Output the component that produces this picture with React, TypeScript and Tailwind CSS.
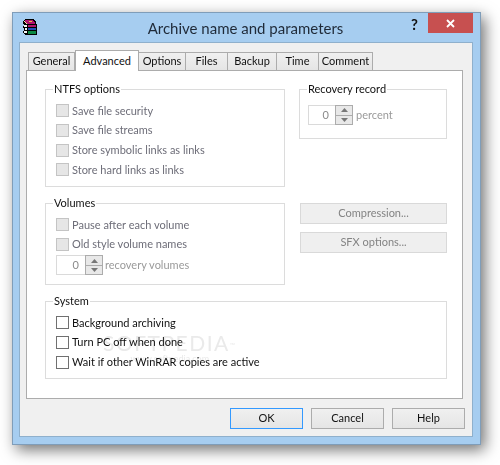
const FONT = "font-['Lato','Open_Sans',sans-serif]";

const TABS = [
  { label: "General", width: "w-[47px]" },
  { label: "Advanced", width: "w-[64px]", active: true },
  { label: "Options", width: "w-[47px]" },
  { label: "Files", width: "w-[42px]" },
  { label: "Backup", width: "w-[49px]" },
  { label: "Time", width: "w-[42px]" },
  { label: "Comment", width: "w-[54px]" },
];

function BookIcon() {
  return (
    <svg width="16" height="16" viewBox="0 0 16 16" shapeRendering="crispEdges">
      <path d="M3 0h9v1h1v1h1v3h1v11H3v-1H2v-1H1v-2h1V9H1V7h1V5H1V2h1V1h1z" fill="#000" />
      <path d="M3 1h8v1h1v1h1v2H5V4H4V3H3z" fill="#b0146e" />
      <path d="M2 2h1v1h1v1h1v1H4V4H3V3H2z" fill="#f4e8a0" />
      <path d="M7 2h3v1H7z" fill="#e8c040" />
      <path d="M6 6h8v2H6z" fill="#b0146e" />
      <path d="M6 9h8v2H6z" fill="#2050b8" />
      <path d="M6 12h8v3H6z" fill="#0c8a44" />
      <path d="M2 6h3v2H2zM3 9h2v2H3zM2 12h3v2H2z" fill="#f4f4f4" />
    </svg>
  );
}

function Checkbox({ label, disabled }: { label: string; disabled?: boolean }) {
  return (
    <div className="flex items-center h-[19.67px]">
      <span
        className={
          disabled
            ? "w-[13px] h-[13px] border border-[#c4c4c4] bg-[#e6e6e6]"
            : "w-[13px] h-[13px] border border-[#707070] bg-white"
        }
      />
      <span className={disabled ? "ml-[3px] text-[#6d6d78]" : "ml-[3px] text-[#111]"}>{label}</span>
    </div>
  );
}

function Spinner({ width, text, textClass }: { width: string; text: string; textClass: string }) {
  return (
    <div className="flex items-center h-[20px]">
      <div className={`${width} h-[20px] border border-[#dadada] border-r-0 text-right pr-[6px] leading-[18px] text-[#8a8a8a]`}>0</div>
      <div className="w-[18px] h-[20px] flex flex-col border border-[#acacac] bg-[#e8e8e8]">
        <span className="flex-1 flex items-center justify-center border-b border-[#acacac]">
          <svg width="7" height="4" viewBox="0 0 7 4"><path d="M3.5 0L7 4H0z" fill="#777" /></svg>
        </span>
        <span className="flex-1 flex items-center justify-center">
          <svg width="7" height="4" viewBox="0 0 7 4"><path d="M0 0h7L3.5 4z" fill="#777" /></svg>
        </span>
      </div>
      <span className={`${textClass} text-[#9a9a9a]`}>{text}</span>
    </div>
  );
}

function Group({ title, className, children }: { title: string; className: string; children: React.ReactNode }) {
  return (
    <fieldset className={`border border-[#dcdcdc] ${className}`}>
      <legend className="ml-[7px] px-[1px] leading-[14px] text-[#111]">{title}</legend>
      {children}
    </fieldset>
  );
}

function DialogButton({ label, focused, disabled }: { label: string; focused?: boolean; disabled?: boolean }) {
  let cls = "border-[#acacac] bg-gradient-to-b from-[#f0f0f0] to-[#e5e5e5] text-[#111]";
  if (focused) cls = "border-[#3399ff] bg-gradient-to-b from-[#f0f0f0] to-[#e5e5e5] text-[#111]";
  if (disabled) cls = "border-[#d9d9d9] bg-[#efefef] text-[#838383]";
  return (
    <div className={`h-[21px] flex items-center justify-center border ${cls} ${disabled ? "w-[147px]" : "w-[73px]"}`}>
      {label}
    </div>
  );
}

export default function App() {
  return (
    <div className={`w-[500px] h-[465px] bg-white pt-[12px] pl-[12px] text-[11px] ${FONT}`}>
      <div className="w-[469px] h-[433px] flex flex-col bg-[#a6cdf0] border border-[#7f9db9] shadow-[4px_5px_14px_rgba(0,0,0,0.55)]">
        {/* title bar */}
        <div className="h-[29px] flex items-start">
          <div className="ml-[9px] mt-[6px] w-[16px]">
            <BookIcon />
          </div>
          <div className="flex-1 pl-[42px] pt-[4px] text-center text-[15px] leading-[22px] text-[#1f2a38]">
            Archive name and parameters
          </div>
          <div className="w-[8px] mt-[1px] text-[15px] font-bold leading-[20px] text-[#111]">?</div>
          <div className="mr-[7px] ml-[9px] w-[45px] h-[20px] bg-[#c75050] flex items-center justify-center">
            <svg width="9" height="9" viewBox="0 0 9 9">
              <path d="M1 1l7 7M8 1l-7 7" stroke="#fff" strokeWidth="1.8" />
            </svg>
          </div>
        </div>

        {/* client area */}
        <div className="ml-[6px] mr-[7px] h-[395px] bg-[#f0f0f0] border border-[#8fb0cc] flex flex-col">
          <div className="pl-[8px] flex items-end h-[27px]">
            {TABS.map((t) =>
              t.active ? (
                <div key={t.label} className={`${t.width} h-[21px] -mb-px relative z-10 bg-white border border-b-0 border-[#acacac] flex items-center justify-center text-[#111]`}>
                  {t.label}
                </div>
              ) : (
                <div key={t.label} className={`${t.width} h-[18px] border border-b-0 border-l-0 first:border-l border-[#acacac] bg-gradient-to-b from-[#f0f0f0] to-[#e5e5e5] flex items-center justify-center text-[#111]`}>
                  {t.label}
                </div>
              )
            )}
          </div>

          <div className="relative ml-[6px] w-[437px] h-[329px] bg-white border border-[#acacac] pl-[18px] pt-[11px]">
            <div className="flex">
              <div className="w-[240px]">
                <Group title="NTFS options" className="h-[105px]">
                  <div className="pl-[10px] pt-[5px]">
                    <Checkbox label="Save file security" disabled />
                    <Checkbox label="Save file streams" disabled />
                    <Checkbox label="Store symbolic links as links" disabled />
                    <Checkbox label="Store hard links as links" disabled />
                  </div>
                </Group>
                <Group title="Volumes" className="h-[89px] mt-[9px]">
                  <div className="pl-[10px] pt-[5px]">
                    <Checkbox label="Pause after each volume" disabled />
                    <Checkbox label="Old style volume names" disabled />
                    <div className="mt-[1px]">
                      <Spinner width="w-[29px]" text="recovery volumes" textClass="ml-[2px]" />
                    </div>
                  </div>
                </Group>
              </div>
              <div className="ml-[14px] w-[148px]">
                <Group title="Recovery record" className="h-[57px]">
                  <div className="pl-[8px] pt-[9px]">
                    <Spinner width="w-[27px]" text="percent" textClass="ml-[3px]" />
                  </div>
                </Group>
                <div className="ml-[1px] mt-[64px] flex flex-col gap-[8px]">
                  <DialogButton label="Compression..." disabled />
                  <DialogButton label="SFX options..." disabled />
                </div>
              </div>
            </div>
            <Group title="System" className="w-[402px] h-[85px] mt-[9px]">
              <div className="pl-[10px] pt-[5px]">
                <Checkbox label="Background archiving" />
                <Checkbox label="Turn PC off when done" />
                <Checkbox label="Wait if other WinRAR copies are active" />
              </div>
            </Group>
            {/* watermark, sits over the checkbox rows in the picture */}
            <div className="absolute left-[76px] top-[262px] flex flex-col items-center mix-blend-multiply pointer-events-none text-[#eaeaea]">
              <span className="text-[21px] leading-[20px] tracking-[1.5px]">
                SOFTPEDIA<sup className="text-[7px]">™</sup>
              </span>
              <span className="text-[9px] leading-[12px]">www.softpedia.com</span>
            </div>
          </div>

          <div className="flex justify-end gap-[8px] pr-[7px] pt-[9px]">
            <DialogButton label="OK" focused />
            <DialogButton label="Cancel" />
            <DialogButton label="Help" />
          </div>
        </div>
      </div>
    </div>
  );
}
